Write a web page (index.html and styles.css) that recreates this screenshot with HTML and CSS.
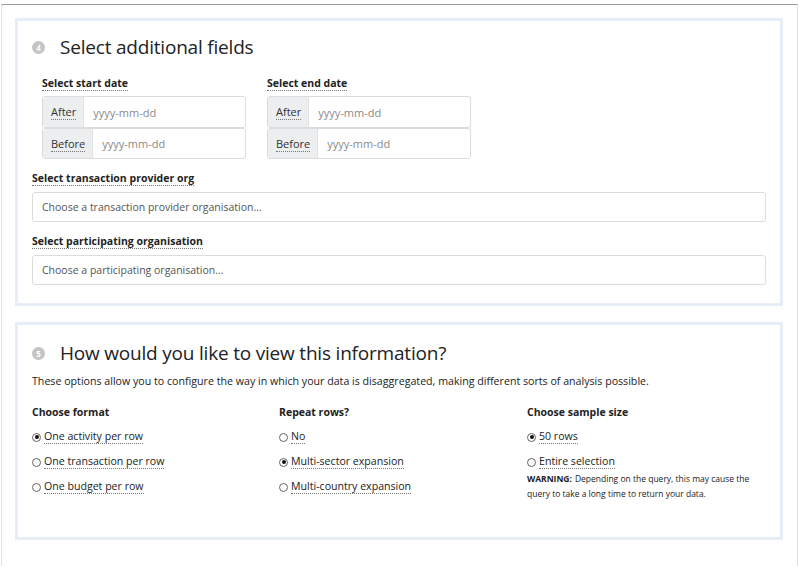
FILE: index.html
```html
<!DOCTYPE html>
<html>
<head>
<meta charset="utf-8">
<link rel="stylesheet" href="styles.css">
</head>
<body>
<div class="frame">
  <section class="panel panel-fields">
    <h2 class="step-title"><span class="step-num">4</span>Select additional fields</h2>
    <div class="dates">
      <div class="date-col">
        <div class="label"><span class="dotted">Select start date</span></div>
        <div class="group">
          <div class="row"><span class="addon"><span class="dotted">After</span></span><span class="ph">yyyy-mm-dd</span></div>
          <div class="row"><span class="addon"><span class="dotted">Before</span></span><span class="ph">yyyy-mm-dd</span></div>
        </div>
      </div>
      <div class="date-col">
        <div class="label"><span class="dotted">Select end date</span></div>
        <div class="group">
          <div class="row"><span class="addon"><span class="dotted">After</span></span><span class="ph">yyyy-mm-dd</span></div>
          <div class="row"><span class="addon"><span class="dotted">Before</span></span><span class="ph">yyyy-mm-dd</span></div>
        </div>
      </div>
    </div>
    <div class="label label-wide"><span class="dotted">Select transaction provider org</span></div>
    <div class="select">Choose a transaction provider organisation...</div>
    <div class="label label-wide label-second"><span class="dotted">Select participating organisation</span></div>
    <div class="select">Choose a participating organisation...</div>
  </section>

  <section class="panel panel-view">
    <h2 class="step-title"><span class="step-num">5</span>How would you like to view this information?</h2>
    <p class="desc">These options allow you to configure the way in which your data is disaggregated, making different sorts of analysis possible.</p>
    <div class="options">
      <div class="opt-col">
        <div class="opt-head">Choose format</div>
        <div class="radio"><span class="dot on"></span><span class="dotted">One activity per row</span></div>
        <div class="radio"><span class="dot"></span><span class="dotted">One transaction per row</span></div>
        <div class="radio"><span class="dot"></span><span class="dotted">One budget per row</span></div>
      </div>
      <div class="opt-col">
        <div class="opt-head">Repeat rows?</div>
        <div class="radio"><span class="dot"></span><span class="dotted">No</span></div>
        <div class="radio"><span class="dot on"></span><span class="dotted">Multi-sector expansion</span></div>
        <div class="radio"><span class="dot"></span><span class="dotted">Multi-country expansion</span></div>
      </div>
      <div class="opt-col">
        <div class="opt-head">Choose sample size</div>
        <div class="radio"><span class="dot on"></span><span class="dotted">50 rows</span></div>
        <div class="radio"><span class="dot"></span><span class="dotted">Entire selection</span></div>
        <div class="warning">
          <div class="warn-line"><b>WARNING:</b><span class="warn-text">Depending on the query, this may cause the</span></div>
          <div class="warn-line"><span class="warn-text">query to take a long time to return your data.</span></div>
        </div>
      </div>
    </div>
  </section>
</div>
</body>
</html>
```
FILE: styles.css
```css
html, body {
  margin: 0;
  padding: 0;
  background: #fff;
}
body {
  font-family: "Open Sans", "Noto Sans", sans-serif;
  color: #222;
  height: 567px;
  overflow: hidden;
}
.frame {
  margin: 4px 1px 0 1px;
  border-top: 1px solid #9a9a9a;
  border-left: 1px solid #e2e2e2;
  border-right: 1px solid #e2e2e2;
  height: 562px;
  box-sizing: border-box;
  padding: 13px 13px 0 13px;
}
.panel {
  border: 3px solid #e7edf7;
  padding: 0 14px;
  width: 734px;
}
.panel-fields {
  height: 282px;
}
.panel-view {
  margin-top: 16px;
  height: 212px;
}
.step-title {
  font-weight: 400;
  font-size: 19px;
  line-height: 26px;
  margin: 0;
  padding-top: 13px;
  display: flex;
  align-items: center;
  letter-spacing: -0.2px;
}
.panel-view .step-title {
  padding-top: 15px;
}
.step-num {
  width: 13px;
  height: 13px;
  border-radius: 50%;
  background: #c4c4c4;
  color: #fff;
  font-size: 8px;
  font-weight: 700;
  line-height: 13px;
  text-align: center;
  margin-right: 15px;
}
.dotted {
  border-bottom: 1px dotted #777;
}
.label {
  font-size: 10.5px;
  font-weight: 700;
  line-height: 14px;
  margin-top: 16px;
}
.dates {
  display: grid;
  grid-template-columns: 204px 204px;
  column-gap: 21px;
  padding-left: 10px;
}
.group {
  margin-top: 6px;
}
.row {
  display: flex;
  align-items: center;
  box-sizing: border-box;
  height: 32px;
  border: 1px solid #dcdcdc;
  border-radius: 3px;
  font-size: 11px;
}
.row + .row {
  height: 31px;
}
.addon {
  background: #eceeef;
  align-self: stretch;
  display: flex;
  align-items: center;
  padding: 0 7px 0 8px;
  border-right: 1px solid #e2e2e2;
  color: #333;
}
.ph {
  color: #8a8a8a;
  padding-left: 9px;
}
.label-wide {
  margin-top: 12px;
}
.label-second {
  margin-top: 12px;
}
.select {
  margin-top: 7px;
  height: 28px;
  border: 1px solid #dcdcdc;
  border-radius: 3px;
  font-size: 10.5px;
  color: #555;
  display: flex;
  align-items: center;
  padding-left: 9px;
}
.desc {
  margin: 8px 0 0 0;
  font-size: 10.65px;
  line-height: 14px;
}
.options {
  display: grid;
  grid-template-columns: 247px 248px 1fr;
  margin-top: 17px;
}
.opt-head {
  font-size: 10.5px;
  font-weight: 700;
  line-height: 14px;
  margin-bottom: 7px;
}
.radio {
  display: flex;
  align-items: center;
  font-size: 10.6px;
  line-height: 13px;
  margin-top: 11px;
}
.dot {
  width: 7px;
  height: 7px;
  border: 1px solid #666;
  border-radius: 50%;
  margin-right: 3px;
  position: relative;
  flex: none;
}
.dot.on::after {
  content: "";
  position: absolute;
  left: 1.5px;
  top: 1.5px;
  width: 4px;
  height: 4px;
  border-radius: 50%;
  background: #111;
}
.warning {
  margin-top: 2px;
  font-size: 8.5px;
  line-height: 15px;
}
.warn-line {
  display: flex;
  gap: 3px;
}
```
